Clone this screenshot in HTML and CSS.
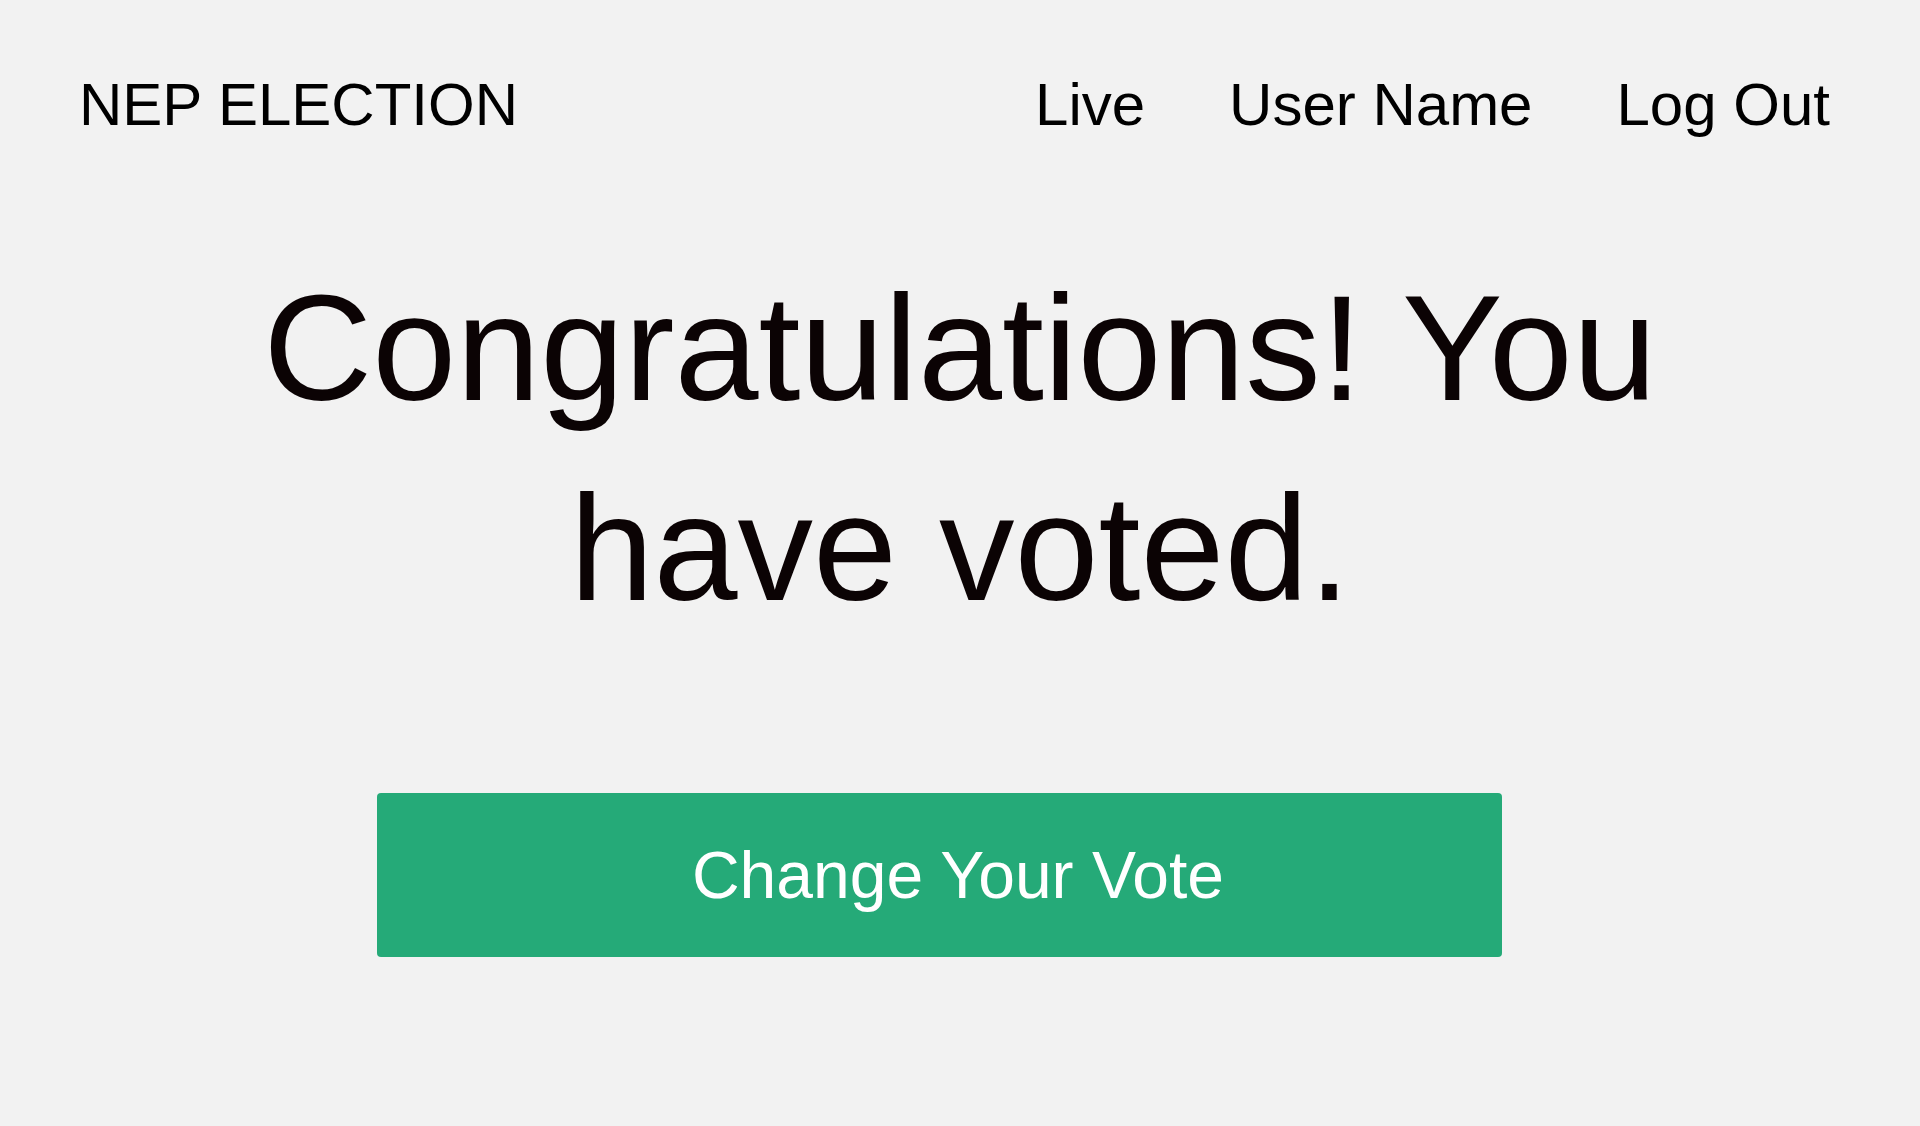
FILE: index.html
```html
<!DOCTYPE html>
<html lang="en">
<head>
<meta charset="utf-8">
<title>NEP Election</title>
<link rel="stylesheet" href="styles.css">
</head>
<body>
<header class="topbar">
  <div class="brand">NEP ELECTION</div>
  <nav class="nav">
    <a class="nav-link" href="#">Live</a>
    <a class="nav-link" href="#">User Name</a>
    <a class="nav-link" href="#">Log Out</a>
  </nav>
</header>
<main class="content">
  <h1 class="title">Congratulations! You have voted.</h1>
  <button class="vote-btn" type="button">Change Your Vote</button>
</main>
</body>
</html>
```
FILE: styles.css
```css
html, body {
  margin: 0;
  padding: 0;
}
body {
  background: #f2f2f2;
  font-family: "Liberation Sans", Arial, sans-serif;
  color: #000;
  min-height: 1126px;
}
.topbar {
  display: flex;
  justify-content: space-between;
  align-items: baseline;
  padding: 70px 90px 0 79px;
  font-size: 60px;
  line-height: 69px;
}
.nav {
  display: flex;
  gap: 84px;
}
.nav-link {
  color: #000;
  text-decoration: none;
}
.content {
  display: flex;
  flex-direction: column;
}
.title {
  margin: 109px auto 0;
  max-width: 1600px;
  font-size: 151px;
  line-height: 200px;
  font-weight: normal;
  text-align: center;
  color: #0b0304;
}
.vote-btn {
  margin: 145px 0 0 377px;
  width: 1125px;
  height: 164px;
  box-sizing: border-box;
  padding: 0 0 0 37px;
  border: none;
  border-radius: 4px;
  background: #25aa78;
  color: #fff;
  font-family: "Liberation Sans", Arial, sans-serif;
  font-size: 66px;
  line-height: 76px;
  text-align: center;
  cursor: pointer;
}
```
